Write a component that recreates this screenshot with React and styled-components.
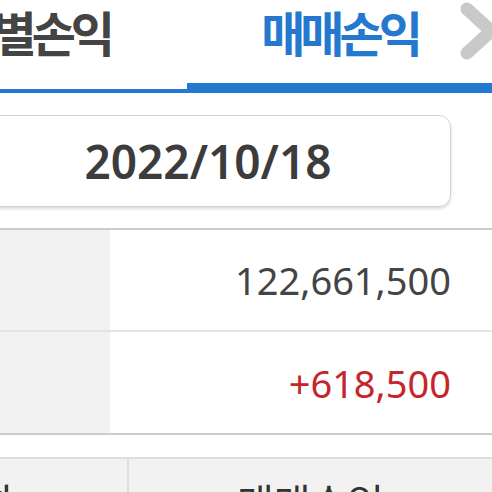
import React from 'react'
import styled, { createGlobalStyle } from 'styled-components'

const GlobalStyle = createGlobalStyle`
  html, body {
    margin: 0;
    padding: 0;
    background: #fff;
    overflow: hidden;
  }
  body {
    font-family: "Noto Sans", "Noto Sans CJK KR", sans-serif;
  }
`

const Screen = styled.div`
  position: relative;
  width: 492px;
  height: 492px;
  overflow: hidden;
  background: #fff;
`

const TabBar = styled.div`
  display: flex;
  height: 93px;
`

const Tab = styled.div`
  flex: 0 0 ${p => p.width}px;
  box-sizing: border-box;
  height: 93px;
  display: flex;
  justify-content: ${p => (p.active ? 'center' : 'flex-end')};
  padding-top: 2px;
  padding-right: ${p => (p.active ? 0 : 77)}px;
  border-bottom: ${p => (p.active ? 10 : 4)}px solid #2479cf;
  overflow: ${p => (p.active ? 'visible' : 'hidden')};
  white-space: nowrap;
  font-family: "Noto Sans CJK KR", sans-serif;
  font-weight: 700;
  font-size: 48px;
  letter-spacing: -5px;
  line-height: 58px;
  color: ${p => (p.active ? '#2479cf' : '#444')};
`

const Chevron = styled.svg`
  position: absolute;
  top: 0;
  right: 0;
  width: 40px;
  height: 62px;
  overflow: visible;
`

const DateBox = styled.div`
  box-sizing: border-box;
  height: 92px;
  margin: 22px 41px 21px -35px;
  border: 1px solid #d2d2d2;
  border-radius: 12px;
  box-shadow: 0 2px 3px rgba(0, 0, 0, 0.14);
  display: flex;
  align-items: center;
  justify-content: center;
  font-size: 46px;
  font-weight: 600;
  color: #3c3c3c;
`

const Summary = styled.div`
  border-top: 2px solid #cccccc;
  border-bottom: 2px solid #cccccc;
`

const SummaryRow = styled.div`
  display: grid;
  grid-template-columns: 110px 1fr;
  height: ${p => p.height}px;
  & + & {
    border-top: 2px solid #e4e4e4;
  }
`

const Label = styled.div`
  background: #f2f2f2;
`

const Value = styled.div`
  display: flex;
  align-items: center;
  justify-content: flex-end;
  padding-right: 41px;
  font-size: 38px;
  color: ${p => p.color || '#444'};
`

const DetailTable = styled.div`
  margin-top: 22px;
  border-top: 2px solid #dddddd;
  display: grid;
  grid-template-columns: 127px 1fr;
  background: #f2f2f2;
  height: 60px;
`

const HeadCell = styled.div`
  display: flex;
  justify-content: ${p => p.align || 'center'};
  padding-top: 18px;
  padding-right: ${p => p.pr || 0}px;
  overflow: hidden;
  white-space: nowrap;
  font-family: "Noto Sans CJK KR", sans-serif;
  font-size: 40px;
  line-height: 48px;
  color: #333;
  & + & {
    border-left: 2px solid #dddddd;
  }
`

export default function App() {
  return (
    <Screen>
      <GlobalStyle />
      <TabBar>
        <Tab width={187}>일별손익</Tab>
        <Tab width={305} active>매매손익</Tab>
      </TabBar>
      <Chevron viewBox="0 0 40 62">
        <polyline
          points="15,9 39,31 15,53"
          fill="none"
          stroke="#c9c9c9"
          strokeWidth="13"
          strokeLinecap="round"
          strokeLinejoin="round"
        />
      </Chevron>
      <DateBox>2022/10/18</DateBox>
      <Summary>
        <SummaryRow height={100}>
          <Label />
          <Value>122,661,500</Value>
        </SummaryRow>
        <SummaryRow height={101}>
          <Label />
          <Value color="#c4262b">+618,500</Value>
        </SummaryRow>
      </Summary>
      <DetailTable>
        <HeadCell align="flex-end" pr={112}>매수/매도하</HeadCell>
        <HeadCell>매매손익</HeadCell>
      </DetailTable>
    </Screen>
  )
}
